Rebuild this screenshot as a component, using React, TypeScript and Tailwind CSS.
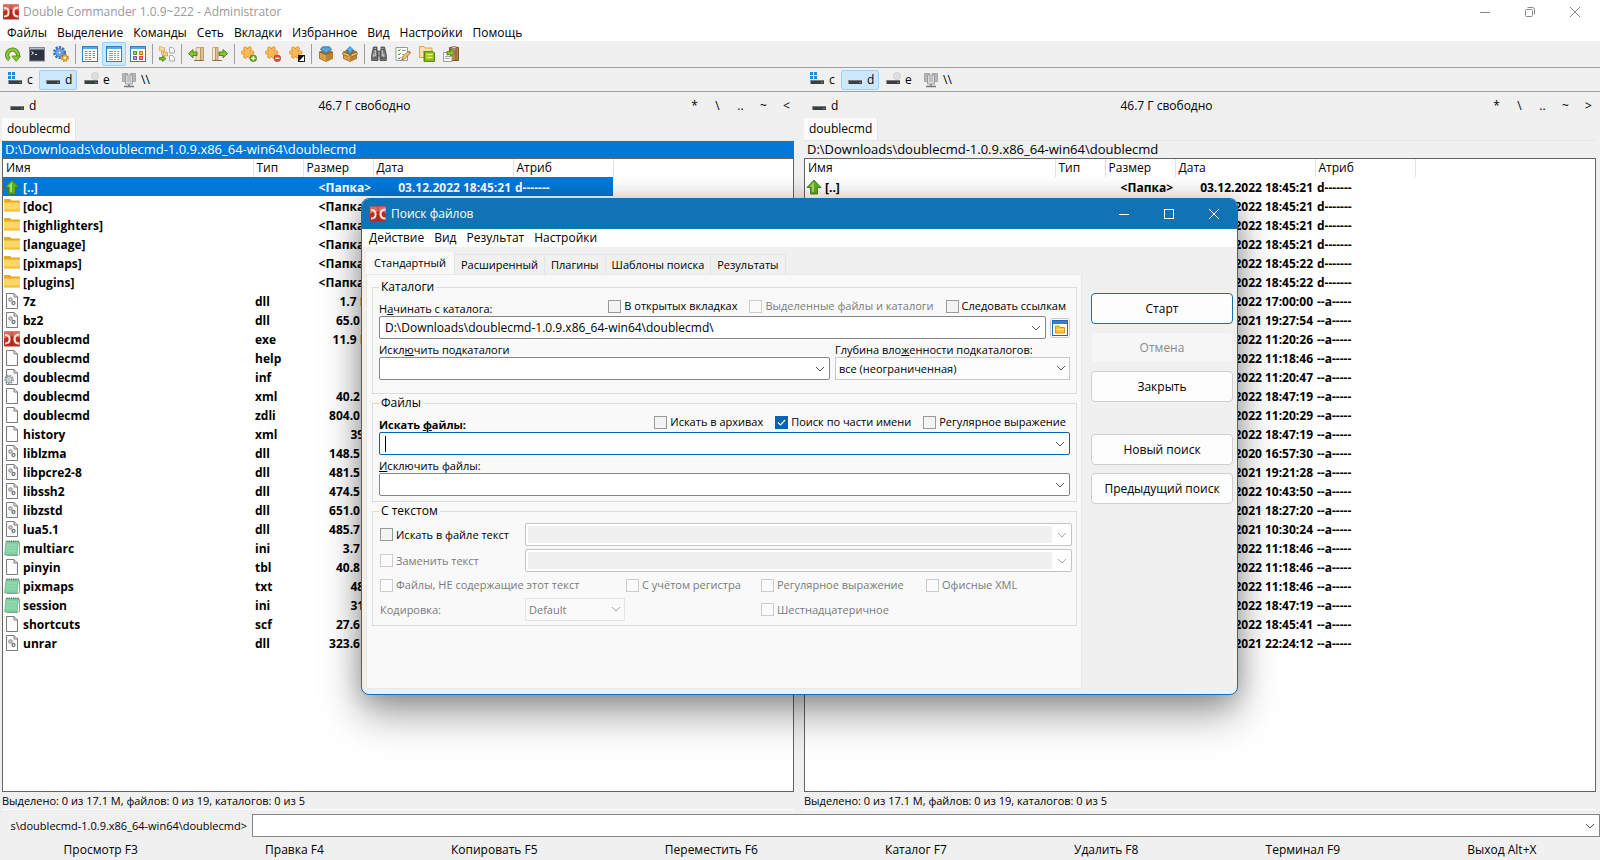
import React, { useState } from 'react';

type IconProps = { className?: string };

interface FileRow {
  icon: 'up' | 'folder' | 'dll' | 'exe' | 'file' | 'inf' | 'note';
  name: string;
  ext: string;
  size: string;
  date: string;
  attr: string;
}

const files: FileRow[] = [
  { icon: 'up', name: '[..]', ext: '', size: '<Папка>', date: '03.12.2022 18:45:21', attr: 'd-------' },
  { icon: 'folder', name: '[doc]', ext: '', size: '<Папка>', date: '03.12.2022 18:45:21', attr: 'd-------' },
  { icon: 'folder', name: '[highlighters]', ext: '', size: '<Папка>', date: '03.12.2022 18:45:21', attr: 'd-------' },
  { icon: 'folder', name: '[language]', ext: '', size: '<Папка>', date: '03.12.2022 18:45:21', attr: 'd-------' },
  { icon: 'folder', name: '[pixmaps]', ext: '', size: '<Папка>', date: '03.12.2022 18:45:22', attr: 'd-------' },
  { icon: 'folder', name: '[plugins]', ext: '', size: '<Папка>', date: '03.12.2022 18:45:22', attr: 'd-------' },
  { icon: 'dll', name: '7z', ext: 'dll', size: '1.7 M', date: '15.07.2022 17:00:00', attr: '--a-----' },
  { icon: 'dll', name: 'bz2', ext: 'dll', size: '65.0 K', date: '03.12.2021 19:27:54', attr: '--a-----' },
  { icon: 'exe', name: 'doublecmd', ext: 'exe', size: '11.9 M', date: '03.12.2022 11:20:26', attr: '--a-----' },
  { icon: 'file', name: 'doublecmd', ext: 'help', size: '', date: '03.12.2022 11:18:46', attr: '--a-----' },
  { icon: 'inf', name: 'doublecmd', ext: 'inf', size: '', date: '03.12.2022 11:20:47', attr: '--a-----' },
  { icon: 'file', name: 'doublecmd', ext: 'xml', size: '40.2 K', date: '03.12.2022 18:47:19', attr: '--a-----' },
  { icon: 'file', name: 'doublecmd', ext: 'zdli', size: '804.0 K', date: '03.12.2022 11:20:29', attr: '--a-----' },
  { icon: 'file', name: 'history', ext: 'xml', size: '390', date: '03.12.2022 18:47:19', attr: '--a-----' },
  { icon: 'dll', name: 'liblzma', ext: 'dll', size: '148.5 K', date: '03.12.2020 16:57:30', attr: '--a-----' },
  { icon: 'dll', name: 'libpcre2-8', ext: 'dll', size: '481.5 K', date: '03.12.2021 19:21:28', attr: '--a-----' },
  { icon: 'dll', name: 'libssh2', ext: 'dll', size: '474.5 K', date: '03.12.2022 10:43:50', attr: '--a-----' },
  { icon: 'dll', name: 'libzstd', ext: 'dll', size: '651.0 K', date: '03.12.2021 18:27:20', attr: '--a-----' },
  { icon: 'dll', name: 'lua5.1', ext: 'dll', size: '485.7 K', date: '03.12.2021 10:30:24', attr: '--a-----' },
  { icon: 'note', name: 'multiarc', ext: 'ini', size: '3.7 K', date: '03.12.2022 11:18:46', attr: '--a-----' },
  { icon: 'file', name: 'pinyin', ext: 'tbl', size: '40.8 K', date: '03.12.2022 11:18:46', attr: '--a-----' },
  { icon: 'note', name: 'pixmaps', ext: 'txt', size: '480', date: '03.12.2022 11:18:46', attr: '--a-----' },
  { icon: 'note', name: 'session', ext: 'ini', size: '310', date: '03.12.2022 18:47:19', attr: '--a-----' },
  { icon: 'file', name: 'shortcuts', ext: 'scf', size: '27.6 K', date: '03.12.2022 18:45:41', attr: '--a-----' },
  { icon: 'dll', name: 'unrar', ext: 'dll', size: '323.6 K', date: '03.12.2021 22:24:12', attr: '--a-----' },
];

const menus = ['Файлы', 'Выделение', 'Команды', 'Сеть', 'Вкладки', 'Избранное', 'Вид', 'Настройки', 'Помощь'];
const functionKeys = [
  'Просмотр F3',
  'Правка F4',
  'Копировать F5',
  'Переместить F6',
  'Каталог F7',
  'Удалить F8',
  'Терминал F9',
  'Выход Alt+X',
];
const currentPath = 'D:\\Downloads\\doublecmd-1.0.9.x86_64-win64\\doublecmd';

/* ---------- icons ---------- */

const Svg = ({ className = 'h-4 w-4', children }: { className?: string; children: React.ReactNode }) => (
  <svg viewBox="0 0 16 16" className={`shrink-0 ${className}`} aria-hidden="true">
    {children}
  </svg>
);

const AppIcon = ({ className }: IconProps) => (
  <Svg className={className}>
    <rect y=".5" width="16" height="15" rx="1" fill="#b92c22" />
    <path d="M0 .5h16V7c-5-2-11-2-16 1z" fill="#e0695d" />
    <path d="M1 4c3 0 4.600 1.800 4.600 4.200S4 12.400 1 12.400" fill="none" stroke="#fbe3df" strokeWidth="2" />
    <path d="M15.500 3.500c-3.500 0-5 2-5 4.600s1.500 4.600 5 4.600" fill="none" stroke="#fbe3df" strokeWidth="2.200" />
    <path d="M8 1v14" stroke="#7d1b14" strokeWidth="1" opacity=".4" />
  </Svg>
);

const RefreshIcon = () => (
  <Svg>
    <path d="M4.500 13.500A5.400 5.400 0 1 1 12 12" fill="none" stroke="#4f8a10" strokeWidth="4.200" />
    <path d="M4.500 13.500A5.400 5.400 0 1 1 12 12" fill="none" stroke="#8cc63a" strokeWidth="2.600" />
    <path d="M6.800 10h8.700l-4.300 5.500z" fill="#8cc63a" stroke="#4f8a10" strokeWidth=".8" />
  </Svg>
);

const TerminalIcon = () => (
  <Svg>
    <rect x=".5" y="1.500" width="15" height="13.500" fill="#2c3240" stroke="#7f8794" />
    <rect x="1" y="2" width="14" height="1.500" fill="#b7bec9" />
    <path d="M2.500 5.500l2 1.500-2 1.500M6 8.500h2" fill="none" stroke="#fff" />
  </Svg>
);

const GearsIcon = () => (
  <Svg>
    <circle cx="6.500" cy="6.500" r="5.300" fill="none" stroke="#3a74b8" strokeWidth="2.400" strokeDasharray="2.200 1.200" />
    <circle cx="6.500" cy="6.500" r="4" fill="#7fb2e8" stroke="#3a74b8" />
    <circle cx="6.500" cy="6.500" r="1.700" fill="#eef" stroke="#3a74b8" strokeWidth=".8" />
    <circle cx="11.800" cy="11.800" r="3.200" fill="none" stroke="#c98116" strokeWidth="1.800" strokeDasharray="1.500 1" />
    <circle cx="11.800" cy="11.800" r="2.500" fill="#f7c25c" stroke="#c98116" strokeWidth=".8" />
    <circle cx="11.800" cy="11.800" r=".9" fill="#fff" />
  </Svg>
);

const BriefIcon = () => (
  <Svg>
    <rect x=".5" y=".5" width="15" height="15" fill="#fff" stroke="#2f7fc1" />
    <rect x="1" y="1" width="14" height="2" fill="#5aa9e0" />
    <path
      d="M3 5.500h2.500M6.700 5.500h2.500M10.500 5.500H13M3 7.500h2.500M6.700 7.500h2.500M10.500 7.500H13M3 9.500h2.500M6.700 9.500h2.500M10.500 9.500H13M3 11.500h2.500M6.700 11.500h2.500M10.500 11.500H13M3 13.500h2.500M6.700 13.500h2.500"
      stroke="#8a8a8a"
    />
  </Svg>
);

const FullIcon = () => (
  <Svg>
    <rect x=".5" y=".5" width="15" height="15" fill="#fff" stroke="#2f7fc1" />
    <rect x="1" y="1" width="14" height="2" fill="#5aa9e0" />
    <path
      d="M3 5.500h4M8 5.500h2M11 5.500h2M3 7.500h4M8 7.500h2M11 7.500h2M3 9.500h4M8 9.500h2M11 9.500h2M3 11.500h4M8 11.500h2M11 11.500h2M3 13.500h4M8 13.500h2M11 13.500h2"
      stroke="#9a9a9a"
    />
  </Svg>
);

const ThumbsIcon = () => (
  <Svg>
    <rect x=".5" y=".5" width="15" height="15" fill="#fff" stroke="#2f7fc1" />
    <rect x="1" y="1" width="14" height="2" fill="#5aa9e0" />
    <rect x="3.500" y="5.500" width="3" height="3" fill="#9cd06a" stroke="#5d9a2c" />
    <rect x="9.500" y="5.500" width="3" height="3" fill="#f3b562" stroke="#cc7d1a" />
    <rect x="3.500" y="10.500" width="3" height="3" fill="#b79be0" stroke="#7a5cb3" />
    <rect x="9.500" y="10.500" width="3" height="3" fill="#f08b8b" stroke="#c94b4b" />
  </Svg>
);

const FlatViewIcon = () => (
  <Svg>
    <path d="M.5.5h2l.7 1h2.300v3.500h-5z" fill="#fbd99a" stroke="#d9b06a" strokeWidth=".8" />
    <path d="M2.500 5.500V8h2" fill="none" stroke="#888" strokeDasharray="1 1" />
    <path d="M4 5.500h2l.7 1H8.500v3.500H4z" fill="#fbd36b" stroke="#c79a3a" strokeWidth=".8" />
    <path d="M.5 11.500h3V9.700l3.500 3-3.500 3v-1.800h-3z" fill="#79b82b" stroke="#477c0c" strokeWidth=".7" />
    <path d="M10.500 1.500h3L15.500 3.500V7h-5zM10.500 9.500h3l2 2V15h-5z" fill="#f4f4f4" stroke="#a5a5a5" strokeWidth=".9" />
  </Svg>
);

const PanelLeftIcon = () => (
  <Svg>
    <path d="M8 1.500h4.500v13H8z" fill="#f3dcc0" stroke="#c3a079" strokeWidth=".8" />
    <path d="M12.500 1.500h3v13h-3z" fill="#e2bf96" stroke="#b08a5e" strokeWidth=".8" />
    <path d="M6 14.500h9.500" stroke="#8e6c42" />
    <path d="M.5 7.500l4.500-4v2.500h4v3.500H5v2.500z" fill="#86c232" stroke="#477c0c" strokeWidth=".9" />
  </Svg>
);

const PanelRightIcon = () => (
  <Svg>
    <path d="M.5 1.500h3v13h-3z" fill="#f8ead5" stroke="#c3a079" strokeWidth=".8" />
    <path d="M3.500 1.500H6v13H3.500z" fill="#e2bf96" stroke="#b08a5e" strokeWidth=".8" />
    <path d="M.5 14.500H10" stroke="#8e6c42" />
    <path d="M15.500 7.500l-4.500-4v2.500H7v3.500h4v2.500z" fill="#86c232" stroke="#477c0c" strokeWidth=".9" />
  </Svg>
);

/* the asterisk shared by the selection buttons */
const SelectionIcon = ({ kind }: { kind: 'add' | 'remove' | 'invert' }) => (
  <Svg>
    <path d="M4.300 2.500l4.400 8M8.700 2.500l-4.400 8M2 6.500h9.500" stroke="#dc8f26" strokeWidth="4" strokeLinecap="round" />
    <path d="M4.300 2.500l4.400 8M8.700 2.500l-4.400 8M2 6.500h9.500" stroke="#f9b95a" strokeWidth="2.600" strokeLinecap="round" />
    {kind === 'add' && (
      <>
        <circle cx="12.300" cy="12.300" r="3.300" fill="#6fae23" stroke="#3f7a0c" strokeWidth=".7" />
        <path d="M12.300 10.300v4M10.300 12.300h4" stroke="#fff" strokeWidth="1.300" />
      </>
    )}
    {kind === 'remove' && (
      <>
        <circle cx="12.300" cy="12.300" r="3.300" fill="#e0503c" stroke="#b02f1e" strokeWidth=".7" />
        <path d="M10.300 12.300h4" stroke="#fff" strokeWidth="1.300" />
      </>
    )}
    {kind === 'invert' && (
      <>
        <rect x="9.500" y="9.500" width="6" height="6" fill="#fff" stroke="#222" />
        <path d="M9.500 9.500h6l-6 6z" fill="#111" />
      </>
    )}
  </Svg>
);

const PackIcon = ({ out = false }: { out?: boolean }) => (
  <Svg>
    <path d="M1.500 6l6.500 2.500L14.500 6v6.500L8 15.500l-6.500-3z" fill="#d9a04a" stroke="#94631a" strokeWidth=".8" />
    <path d="M8 8.500L14.500 6v6.500L8 15.500z" fill="#bd8230" />
    {out && <path d="M1.500 6L.3 8 6 10.500l2-2 2 2L15.700 8l-1.200-2L8 8.500z" fill="#efc27a" stroke="#94631a" strokeWidth=".8" />}
    <path d="M1.500 6L8 3.500 14.500 6 8 8.500z" fill="#a8742a" stroke="#94631a" strokeWidth=".8" />
    {out ? (
      <path d="M8 .5l4 4H9.800V7H6.200V4.500H4z" fill="#58b4e8" stroke="#1d6fa5" strokeWidth=".7" />
    ) : (
      <path d="M8 7.500L2.500 3.500 4.500.8h7l2 2.700z" fill="#58a4d8" stroke="#1d5f95" strokeWidth=".7" />
    )}
  </Svg>
);

const BinocularsIcon = () => (
  <Svg>
    <path d="M2.500 1H6v3l1 1.500v9H.7V9zM13.500 1H10v3L9 5.500v9h6.300V9z" fill="#7a7a7a" stroke="#3c3c3c" strokeWidth=".8" />
    <rect x="6.500" y="5" width="3" height="5" fill="#8d8d8d" stroke="#3c3c3c" strokeWidth=".6" />
    <path d="M2.700 8v3.500M4.300 2v8M11.300 2v8M12.800 8v3.500" stroke="#d2d2d2" />
    <path d="M.7 12h6M9.300 12h6M2.500 3.500H6M10 3.500h3.500" stroke="#3c3c3c" strokeWidth=".8" />
  </Svg>
);

const MultiRenameIcon = () => (
  <Svg>
    <path d="M1 1.500h11.500v13H1z" fill="#fdfdfd" stroke="#9a9a9a" />
    <path d="M3 4l1 1 1.500-2M3 8l1 1 1.500-2M3 12l1 1 1.500-2" fill="none" stroke="#4b9a1d" />
    <path d="M7 4.500h4M7 8.500h2" stroke="#9a9a9a" />
    <path d="M7.500 11l5.500-5.500 2 2L9.500 13l-2.700.8z" fill="#f5c56a" stroke="#8a6a2a" strokeWidth=".8" />
    <path d="M13 5.500l1-1 2 2-1 1z" fill="#d66a6a" />
  </Svg>
);

const SyncDirsIcon = () => (
  <Svg>
    <path d="M.5.5H5l1 1.500h7v9.500H.5z" fill="#fbe2a0" stroke="#d3a03c" strokeWidth=".9" />
    <path d="M5.500 5.500h8.500l1 1h.5v9h-10z" fill="#8fbf1f" stroke="#587f0a" strokeWidth=".9" />
    <path d="M5 15.500V5" stroke="#587f0a" />
    <path d="M7.500 8.500h6M7.500 11.500h6" stroke="#f4ef6a" strokeWidth="1.500" />
  </Svg>
);

const CopyNamesIcon = () => (
  <Svg>
    <path d="M6.500 1.500h9v13h-9z" fill="#b98850" stroke="#7e5526" />
    <path d="M13 2v12" stroke="#8d6a42" strokeWidth="1.500" />
    <rect x="9" y=".5" width="4" height="2" fill="#d0d0d0" stroke="#777" strokeWidth=".7" />
    <path d="M.5 6.500h6l2.500 2v7H.5z" fill="#fafafa" stroke="#888" strokeWidth=".8" />
    <path d="M2 10.500h5M2 12.500h5" stroke="#aaa" />
    <path d="M4 9V5.500h3.500V3l4.500 4-4.500 3.500V8.500z" fill="#86c232" stroke="#477c0c" strokeWidth=".8" />
  </Svg>
);

const DriveIcon = ({ kind = 'disk' }: { kind?: 'system' | 'disk' | 'optical' | 'network' }) => {
  if (kind === 'network') {
    return (
      <Svg>
        <path d="M1.500 1.500h5v8h-5zM9.500 1.500h5v8h-5z" fill="#b9b9b9" stroke="#9a9a9a" strokeWidth=".8" />
        <path d="M4.500 3h7v9h-7z" fill="#dcdcdc" stroke="#8f8f8f" strokeWidth=".8" />
        <path d="M6 5h4M6 7h4M6 9h4" stroke="#a5a5a5" />
        <path d="M8 12v2.500M3 14.500h10" stroke="#777" strokeWidth="1.300" />
      </Svg>
    );
  }
  return (
    <Svg>
      {kind === 'system' && <path d="M1 0h3v3H1zM5 0h3v3H5zM1 4h3v3H1zM5 4h3v3H5z" fill="#1590e0" />}
      {kind === 'optical' && (
        <>
          <circle cx="12" cy="4" r="3.500" fill="#e3e3e3" stroke="#c6c6c6" strokeWidth=".8" />
          <circle cx="12" cy="4" r="1" fill="#fff" stroke="#bbb" strokeWidth=".5" />
        </>
      )}
      <rect x="1.500" y="8" width="13.500" height="4" rx=".5" fill="#3c3f41" />
      <rect x="1.500" y="8" width="13.500" height="1" fill="#77797a" />
      <rect x="12" y="10" width="2" height="1" fill="#6d8a66" />
    </Svg>
  );
};

const FileIcon = ({ kind }: { kind: FileRow['icon'] }) => {
  switch (kind) {
    case 'up':
      return (
        <Svg>
          <path d="M8 1l7 7.500h-3.500V15h-7V8.500H1z" fill="#5fae1e" stroke="#3f7d16" strokeWidth=".9" />
          <path d="M8 2.800L4 7.500h2V13h2z" fill="#a6dc6a" />
        </Svg>
      );
    case 'folder':
      return (
        <Svg>
          <path d="M0 2c0-.6.4-1 1-1h5l1.500 1.500H15c.6 0 1 .4 1 1V6H0z" fill="#e9a91c" />
          <path d="M0 4.500h16v8c0 .6-.4 1-1 1H1c-.6 0-1-.4-1-1z" fill="#fdd766" />
          <path d="M0 11.500h16v1c0 .6-.4 1-1 1H1c-.6 0-1-.4-1-1z" fill="#f3c043" />
        </Svg>
      );
    case 'exe':
      return <AppIcon />;
    case 'note':
      return (
        <Svg>
          <path d="M3 2.500h12.500v12L13 15.500H3z" fill="#fff" stroke="#7d8a80" strokeWidth=".8" />
          <path d="M2 1.500h12.500L13 15H.6z" fill="#82d2a2" stroke="#5aa57a" strokeWidth=".6" />
          <path d="M3 .3v2M5.200.3v2M7.400.3v2M9.600.3v2M11.800.3v2M14 .3v2" stroke="#55695c" strokeWidth=".9" />
          <path d="M2.500 5h10.500M2.200 8h10.500M2 11h10.300" stroke="#a9e3c0" strokeWidth=".7" />
        </Svg>
      );
    default:
      return (
        <Svg>
          <path d="M2.500.5H10L13.500 4v11.500h-11z" fill="#fcfcfc" stroke="#7b7b7b" />
          <path d="M10 .5V4h3.500" fill="none" stroke="#7b7b7b" />
          {kind === 'dll' && (
            <>
              <circle cx="6.500" cy="6.500" r="1.700" fill="#d8d8d8" stroke="#9b9b9b" strokeWidth="1.300" />
              <circle cx="9.500" cy="10" r="1.500" fill="#fff" stroke="#6d7b88" strokeWidth="1.300" />
            </>
          )}
          {kind === 'inf' && (
            <>
              <circle cx="5" cy="10.500" r="4" fill="none" stroke="#8e9699" strokeWidth="1.600" strokeDasharray="1.700 1" />
              <circle cx="5" cy="10.500" r="3" fill="#e2e5e6" stroke="#8e9699" />
              <circle cx="5" cy="10.500" r="1" fill="#fff" stroke="#8e9699" strokeWidth=".7" />
            </>
          )}
        </Svg>
      );
  }
};

const Chevron = ({ className = 'text-[#555555]' }: IconProps) => (
  <svg viewBox="0 0 10 6" className={`h-[6px] w-[10px] shrink-0 ${className}`} aria-hidden="true">
    <path d="M1 1l4 4 4-4" fill="none" stroke="currentColor" />
  </svg>
);

/* ---------- small controls ---------- */

interface CheckProps {
  id: string;
  label: string;
  checked?: boolean;
  disabled?: boolean;
}

function Check({ id, label, checked = false, disabled = false }: CheckProps) {
  const [on, setOn] = useState(checked);
  return (
    <label htmlFor={id} className={`flex items-center gap-[3px] leading-[14px] ${disabled ? 'text-[#7a7a7a]' : ''}`}>
      <span className="relative h-[13px] w-[13px] shrink-0">
        <input
          id={id}
          type="checkbox"
          checked={on}
          disabled={disabled}
          onChange={(e) => setOn(e.target.checked)}
          className="block h-[13px] w-[13px] appearance-none border border-[#9a9a9a] bg-[#f3f3f3] checked:border-[#0067b8] checked:bg-[#0067b8] disabled:border-[#cccccc] disabled:bg-[#fbfbfb]"
        />
        {on && (
          <svg viewBox="0 0 13 13" className="pointer-events-none absolute inset-0" aria-hidden="true">
            <path d="M3 6.500l2.500 2.500 4.500-5" fill="none" stroke="#fff" strokeWidth="1.200" />
          </svg>
        )}
      </span>
      {label}
    </label>
  );
}

interface ComboProps {
  id: string;
  value?: string;
  active?: boolean;
  disabled?: boolean;
  label?: string;
}

function Combo({ id, value = '', active = false, disabled = false, label }: ComboProps) {
  const [text, setText] = useState(value);
  const frame = active ? 'border-[#0067b8]' : disabled ? 'border-[#c4c4c4]' : 'border-[#868686]';
  return (
    <div className={`flex h-[23px] min-w-0 flex-1 items-center rounded-[2px] border bg-white ${frame}`}>
      {active && <span className="ml-[5px] h-4 w-px bg-black" />}
      <input
        id={id}
        aria-label={label}
        value={text}
        disabled={disabled}
        onChange={(e) => setText(e.target.value)}
        className={`min-w-0 flex-1 text-[12px] outline-none ${
          disabled ? 'ml-[2px] h-[17px] bg-[#f0f0f0]' : active ? 'h-5' : 'h-5 pl-[5px]'
        }`}
      />
      <button type="button" aria-label="Открыть список" disabled={disabled} className="flex h-5 w-[19px] items-center justify-center">
        <Chevron className={disabled ? 'text-[#a8a8a8]' : 'text-[#555555]'} />
      </button>
    </div>
  );
}

function Group({ title, className, children }: { title: string; className: string; children: React.ReactNode }) {
  return (
    <fieldset className={`border border-[#dcdcdc] pl-[6px] ${className}`}>
      <legend className="h-[14px] px-[2px] text-[12px] leading-[14px]">{title}</legend>
      {children}
    </fieldset>
  );
}

/* ---------- main window ---------- */

const Divider = () => <span className="mx-[2px] h-5 w-px bg-[#9d9d9d]" />;

function ToolButton({ label, active = false, children }: { label: string; active?: boolean; children: React.ReactNode }) {
  return (
    <button
      type="button"
      aria-label={label}
      className={`flex h-6 w-6 items-center justify-center border ${
        active ? 'rounded-[2px] border-[#99d1ff] bg-[#cce8ff]' : 'border-transparent'
      }`}
    >
      {children}
    </button>
  );
}

function Toolbar() {
  return (
    <div className="flex h-[27px] items-end border-b border-[#9f9f9f] pb-px pl-px">
      <div className="flex items-center">
        <ToolButton label="Обновить"><RefreshIcon /></ToolButton>
        <ToolButton label="Терминал"><TerminalIcon /></ToolButton>
        <ToolButton label="Настройки"><GearsIcon /></ToolButton>
        <Divider />
        <ToolButton label="Краткий"><BriefIcon /></ToolButton>
        <ToolButton label="Подробный" active><FullIcon /></ToolButton>
        <ToolButton label="Эскизы"><ThumbsIcon /></ToolButton>
        <Divider />
        <ToolButton label="Без подкаталогов"><FlatViewIcon /></ToolButton>
        <Divider />
        <ToolButton label="Влево"><PanelLeftIcon /></ToolButton>
        <ToolButton label="Вправо"><PanelRightIcon /></ToolButton>
        <Divider />
        <ToolButton label="Выделить группу"><SelectionIcon kind="add" /></ToolButton>
        <ToolButton label="Снять выделение"><SelectionIcon kind="remove" /></ToolButton>
        <ToolButton label="Инвертировать"><SelectionIcon kind="invert" /></ToolButton>
        <Divider />
        <ToolButton label="Упаковать"><PackIcon /></ToolButton>
        <ToolButton label="Распаковать"><PackIcon out /></ToolButton>
        <Divider />
        <ToolButton label="Поиск"><BinocularsIcon /></ToolButton>
        <ToolButton label="Групповое переименование"><MultiRenameIcon /></ToolButton>
        <ToolButton label="Синхронизация"><SyncDirsIcon /></ToolButton>
        <ToolButton label="Копировать имена"><CopyNamesIcon /></ToolButton>
      </div>
    </div>
  );
}

function DriveBar() {
  const drives = [
    { name: 'c', kind: 'system' as const },
    { name: 'd', kind: 'disk' as const },
    { name: 'e', kind: 'optical' as const },
    { name: '\\\\', kind: 'network' as const },
  ];
  return (
    <div className="flex flex-1 items-center pl-px">
      {drives.map((drive) => (
        <button
          key={drive.name}
          type="button"
          className={`flex h-5 w-[38px] items-center gap-1 border pl-[5px] ${
            drive.name === 'd' ? 'rounded-[2px] border-[#99d1ff] bg-[#cce8ff]' : 'border-transparent'
          }`}
        >
          <DriveIcon kind={drive.kind} />
          {drive.name}
        </button>
      ))}
    </div>
  );
}

function FilePanel({ side }: { side: 'left' | 'right' }) {
  const isActive = side === 'left';
  const shortcuts = ['*', '\\', '..', '~', isActive ? '<' : '>'];
  const headCell = 'border-r border-[#e2e2e2] pl-[3px] text-left font-normal';

  return (
    <section className="flex min-w-0 flex-1 flex-col">
      <div className="flex h-6 items-center">
        <button type="button" className="flex w-[46px] items-center gap-1 pl-[9px]">
          <DriveIcon />
          d
        </button>
        <span className="flex-1 text-center">46.7 Г свободно</span>
        <div className="flex">
          {shortcuts.map((s) => (
            <button key={s} type="button" className="w-[23px] text-center">
              {s}
            </button>
          ))}
        </div>
      </div>

      <div className="flex flex-1 flex-col pl-[2px] pr-1">
        <div className="flex h-[23px] items-end border-b border-[#e5e5e5]">
          <button type="button" className="h-[22px] border-r border-[#e5e5e5] bg-[#fbfbfb] px-[5px]">
            doublecmd
          </button>
        </div>
        <div className={`h-[17px] px-[3px] text-[13px] leading-[17px] ${isActive ? 'bg-[#0078d7] text-white' : ''}`}>
          {currentPath}
        </div>

        <div className="flex-1 border border-[#646464] bg-white">
          <table className="w-[610px] table-fixed border-collapse">
            <colgroup>
              <col className="w-[250px]" />
              <col className="w-[50px]" />
              <col className="w-[70px]" />
              <col className="w-[140px]" />
              <col className="w-[100px]" />
            </colgroup>
            <thead>
              <tr className="h-[18px]">
                <th className={headCell}>Имя</th>
                <th className={headCell}>Тип</th>
                <th className={headCell}>Размер</th>
                <th className={headCell}>Дата</th>
                <th className={headCell}>Атриб</th>
              </tr>
            </thead>
            <tbody className="font-bold">
              {files.map((file, index) => (
                <tr
                  key={index}
                  className={`h-[19px] whitespace-nowrap leading-[17px] ${
                    isActive && index === 0 ? 'bg-[#0078d7] text-white' : 'text-black'
                  }`}
                >
                  <td className="p-0">
                    <div className="flex h-[19px] items-center gap-[3px] pl-px">
                      <FileIcon kind={file.icon} />
                      <span className="pt-[2px]">{file.name}</span>
                    </div>
                  </td>
                  <td className="pl-[2px] pt-[2px]">{file.ext}</td>
                  <td className="pr-[2px] pt-[2px] text-right">{file.size}</td>
                  <td className="pr-[2px] pt-[2px] text-right">{file.date}</td>
                  <td className="pl-[2px] pt-[2px]">{file.attr}</td>
                </tr>
              ))}
            </tbody>
          </table>
        </div>
        <div className="h-[18px] border-b border-white text-[11px] leading-[18px]">
          Выделено: 0 из 17.1 M, файлов: 0 из 19, каталогов: 0 из 5
        </div>
      </div>
    </section>
  );
}

/* ---------- search dialog ---------- */

function SearchDialog() {
  const tabs = ['Расширенный', 'Плагины', 'Шаблоны поиска', 'Результаты'];
  const pushButton = 'h-[31px] rounded-[4px] border bg-[#fdfdfd] text-[12px]';

  return (
    <div
      role="dialog"
      aria-label="Поиск файлов"
      className="absolute left-[361px] top-[198px] flex h-[497px] w-[877px] flex-col overflow-hidden rounded-lg border border-[#1173b3] bg-[#f0f0f0] shadow-[0_20px_40px_rgba(0,0,0,0.36),0_2px_24px_rgba(0,0,0,0.22)]"
    >
      <div className="flex h-[30px] shrink-0 items-center bg-[#1173b3] pl-2 pr-px text-white">
        <AppIcon />
        <span className="ml-[5px] flex-1">Поиск файлов</span>
        <button type="button" aria-label="Свернуть" className="flex h-[30px] w-[45px] items-center justify-center">
          <svg viewBox="0 0 10 10" className="h-[10px] w-[10px]"><path d="M0 5.500h10" stroke="#fff" /></svg>
        </button>
        <button type="button" aria-label="Развернуть" className="flex h-[30px] w-[45px] items-center justify-center">
          <svg viewBox="0 0 10 10" className="h-[10px] w-[10px]"><rect x=".5" y=".5" width="9" height="9" fill="none" stroke="#fff" /></svg>
        </button>
        <button type="button" aria-label="Закрыть окно" className="flex h-[30px] w-[45px] items-center justify-center">
          <svg viewBox="0 0 10 10" className="h-[10px] w-[10px]"><path d="M0 0l10 10M10 0L0 10" stroke="#fff" /></svg>
        </button>
      </div>

      <nav className="flex h-[18px] shrink-0 items-center bg-white pl-[2px]">
        {['Действие', 'Вид', 'Результат', 'Настройки'].map((m) => (
          <button key={m} type="button" className="px-[5px] leading-[20px]">
            {m}
          </button>
        ))}
      </nav>

      <div className="flex min-h-0 flex-1 pb-[5px] pl-1 pr-1 text-[11px]">
        <form className="flex min-w-0 flex-1 flex-col pt-[5px]" onSubmit={(e) => e.preventDefault()}>
          <div className="flex h-[22px] items-end">
            <button type="button" className="h-[22px] border-r border-[#e5e5e5] bg-[#f9f9f9] px-2 leading-[20px]">
              Стандартный
            </button>
            {tabs.map((t) => (
              <button key={t} type="button" className="h-5 border-r border-t border-[#e5e5e5] px-[6px] leading-[20px]">
                {t}
              </button>
            ))}
          </div>

          <div className="flex flex-1 flex-col border border-[#e8e8e8] bg-[#f9f9f9] pl-[5px] pr-1 pt-[5px]">
            <Group title="Каталоги" className="h-[114px] pr-[6px]">
              <div className="flex h-[22px] items-end">
                <label htmlFor="start" className="flex-1 leading-[14px]">
                  Н<u>а</u>чинать с каталога:
                </label>
                <div className="flex gap-3 pb-[3px] pr-1">
                  <Check id="openTabs" label="В открытых вкладках" />
                  <Check id="selected" label="Выделенные файлы и каталоги" disabled />
                  <Check id="links" label="Следовать ссылкам" />
                </div>
              </div>
              <div className="flex items-center gap-1">
                <Combo id="start" value={currentPath + '\\'} />
                <button
                  type="button"
                  aria-label="Выбрать каталог"
                  className="flex h-5 w-5 items-center justify-center rounded-[3px] border border-[#c8c8c8] bg-[#fdfdfd]"
                >
                  <Svg>
                    <rect x=".5" y=".5" width="15" height="15" fill="#fff" stroke="#2a62b8" />
                    <rect x="1" y="1" width="14" height="3" fill="#3d7ad0" />
                    <path d="M3.500 6H7l1 1.500h4.500V13h-9z" fill="#fbc53c" stroke="#c98116" strokeWidth=".8" />
                    <path d="M5 9.500h7" stroke="#fff0b8" />
                  </Svg>
                </button>
              </div>
              <div className="flex gap-[5px]">
                <div className="flex flex-1 flex-col">
                  <label htmlFor="excludeDirs" className="h-[18px] leading-[22px]">
                    Искл<u>ю</u>чить подкаталоги
                  </label>
                  <div className="flex">
                    <Combo id="excludeDirs" />
                  </div>
                </div>
                <div className="flex w-[235px] flex-col">
                  <label htmlFor="depth" className="h-[18px] whitespace-nowrap leading-[22px]">
                    Глубина вло<u>ж</u>енности подкаталогов:
                  </label>
                  <div className="relative">
                    <select id="depth" className="h-[23px] w-full appearance-none border border-[#c8c8c8] bg-[#fdfdfd] px-[3px] text-[11px]">
                      <option>все (неограниченная)</option>
                    </select>
                    <Chevron className="pointer-events-none absolute right-1 top-2 text-[#555555]" />
                  </div>
                </div>
              </div>
            </Group>

            <Group title="Файлы" className="mt-[2px] h-[106px] pr-[6px]">
              <div className="flex h-[22px] items-end">
                <label htmlFor="mask" className="flex-1 font-bold leading-[14px]">
                  Искать <u>ф</u>айлы:
                </label>
                <div className="flex gap-3 pb-[3px] pr-1">
                  <Check id="archives" label="Искать в архивах" />
                  <Check id="partial" label="Поиск по части имени" checked />
                  <Check id="maskRegex" label="Регулярное выражение" />
                </div>
              </div>
              <div className="flex">
                <Combo id="mask" active />
              </div>
              <label htmlFor="excludeFiles" className="block h-[18px] leading-[22px]">
                <u>И</u>сключить файлы:
              </label>
              <div className="flex">
                <Combo id="excludeFiles" />
              </div>
            </Group>

            <Group title="С текстом" className="mt-[2px] h-[122px] pr-1">
              <div className="mt-[5px] flex flex-col gap-[3px] pl-px">
                <div className="flex items-center">
                  <div className="w-[145px]">
                    <Check id="findText" label="Искать в файле текст" />
                  </div>
                  <Combo id="findTextValue" label="Искать текст" disabled />
                </div>
                <div className="flex items-center">
                  <div className="w-[145px]">
                    <Check id="replaceText" label="Заменить текст" disabled />
                  </div>
                  <Combo id="replaceTextValue" label="Заменить на" disabled />
                </div>
              </div>
              <div className="grid grid-cols-[246px_135px_165px_1fr] items-center whitespace-nowrap pl-px">
                <div className="flex h-[26px] items-center"><Check id="notContaining" label="Файлы, НЕ содержащие этот текст" disabled /></div>
                <Check id="caseSensitive" label="С учётом регистра" disabled />
                <Check id="textRegex" label="Регулярное выражение" disabled />
                <Check id="office" label="Офисные XML" disabled />
                <div className="col-span-2 flex h-[23px] items-center text-[#7a7a7a]">
                  <label htmlFor="encoding" className="w-[145px]">
                    Кодировка:
                  </label>
                  <div className="relative w-[100px]">
                    <select id="encoding" disabled className="h-[23px] w-full appearance-none border border-[#e5e5e5] bg-[#fafafa] px-[3px] text-[11px]">
                      <option>Default</option>
                    </select>
                    <Chevron className="pointer-events-none absolute right-1 top-2 text-[#a8a8a8]" />
                  </div>
                </div>
                <Check id="hex" label="Шестнадцатеричное" disabled />
              </div>
            </Group>
          </div>
        </form>

        <div className="ml-[9px] flex w-[142px] shrink-0 flex-col gap-2 pt-[46px]">
          <button type="button" className={`${pushButton} border-[#1173b3]`}>Старт</button>
          <button type="button" disabled className="h-[31px] rounded-[4px] border border-[#f0f0f0] bg-[#f6f6f6] text-[12px] text-[#8a8a8a]">Отмена</button>
          <button type="button" className={`${pushButton} border-[#cfcfcf]`}>Закрыть</button>
          <button type="button" className={`${pushButton} mt-6 border-[#cfcfcf]`}>Новый поиск</button>
          <button type="button" className={`${pushButton} border-[#cfcfcf]`}>Предыдущий поиск</button>
        </div>
      </div>
    </div>
  );
}

export default function App() {
  const [command, setCommand] = useState('');

  return (
    <div className="relative flex min-h-screen flex-col overflow-hidden bg-[#f0f0f0] font-['Open_Sans','Noto_Sans',sans-serif] text-[12px] leading-4 text-black">
      <header className="bg-white">
        <div className="flex h-6 items-center pl-[3px] pr-[3px] text-[#9a9a9a]">
          <AppIcon />
          <span className="ml-1 flex-1">Double Commander 1.0.9~222 - Administrator</span>
          <button type="button" aria-label="Свернуть" className="flex h-5 w-[45px] items-center justify-center">
            <svg viewBox="0 0 10 10" className="h-[10px] w-[10px]"><path d="M0 5.500h10" stroke="#888" /></svg>
          </button>
          <button type="button" aria-label="Восстановить" className="flex h-5 w-[45px] items-center justify-center">
            <svg viewBox="0 0 10 10" className="h-[10px] w-[10px]">
              <rect x=".5" y="2.500" width="7" height="7" rx="1" fill="none" stroke="#888" />
              <path d="M2.500.5h5a2 2 0 0 1 2 2v5" fill="none" stroke="#888" />
            </svg>
          </button>
          <button type="button" aria-label="Закрыть" className="flex h-5 w-[45px] items-center justify-center">
            <svg viewBox="0 0 10 10" className="h-[10px] w-[10px]"><path d="M0 0l10 10M10 0L0 10" stroke="#888" /></svg>
          </button>
        </div>
        <nav className="flex h-[17px] items-center pl-[2px]">
          {menus.map((m) => (
            <button key={m} type="button" className="px-[5px]">
              {m}
            </button>
          ))}
        </nav>
      </header>

      <Toolbar />
      <div className="flex h-6 gap-1 border-b border-[#9f9f9f]">
        <DriveBar />
        <DriveBar />
      </div>

      <main className="flex flex-1 gap-1 pt-[2px]">
        <FilePanel side="left" />
        <FilePanel side="right" />
      </main>

      <div className="flex h-[29px] pt-1">
        <label htmlFor="command" className="w-[252px] whitespace-nowrap pr-[5px] text-right text-[11px] leading-[24px]">
          s\doublecmd-1.0.9.x86_64-win64\doublecmd&gt;
        </label>
        <div className="flex h-[23px] flex-1 items-center border border-[#868686] bg-white">
          <input
            id="command"
            value={command}
            onChange={(e) => setCommand(e.target.value)}
            className="h-5 flex-1 px-1 outline-none"
          />
          <button type="button" aria-label="История" className="flex h-5 w-[19px] items-center justify-center">
            <Chevron />
          </button>
        </div>
      </div>
      <footer className="flex h-[21px] pt-px">
        {functionKeys.map((k) => (
          <button key={k} type="button" className="flex-auto">
            {k}
          </button>
        ))}
      </footer>

      <SearchDialog />
    </div>
  );
}
